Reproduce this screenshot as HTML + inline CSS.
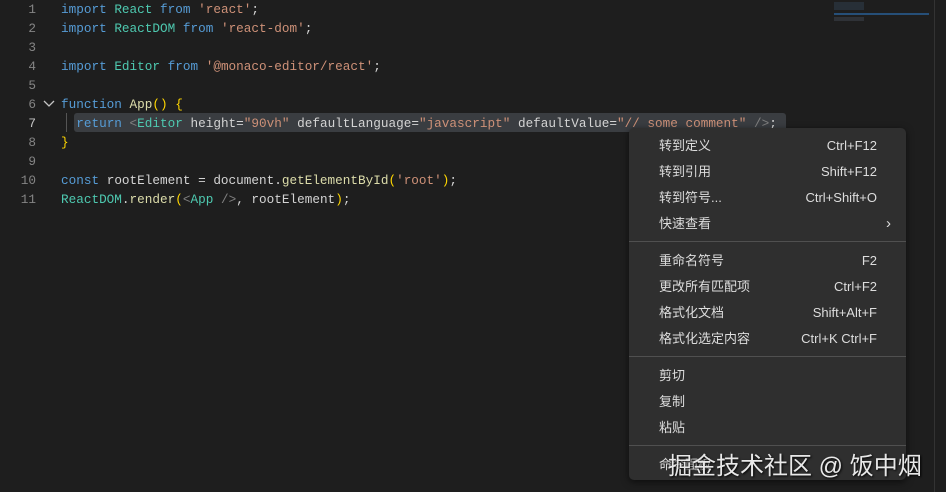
<!DOCTYPE html>
<html><head><meta charset="utf-8"><style>
body{margin:0;width:946px;height:492px;background:#1e1e1e;overflow:hidden;position:relative;font-family:"Liberation Mono",monospace}
.ln{position:absolute;left:0;width:36px;text-align:right;color:#858585;font-size:12.7px;line-height:19px}
.code{position:absolute;left:61px;font-size:12.7px;line-height:19px;color:#d4d4d4;white-space:pre}
.k{color:#569cd6}.c{color:#c586c0}.s{color:#ce9178}.t{color:#4ec9b0}.f{color:#dcdcaa}.v{color:#d4d4d4}.a{color:#d4d4d4}.y{color:#ffd700}.g{color:#808080}
.menu{position:absolute;left:629px;top:128px;width:277px;height:352px;background:#2f2f2f;border-radius:5px;box-shadow:0 2px 8px rgba(0,0,0,.6);font-family:"Liberation Sans","Noto Sans CJK SC",sans-serif;font-size:13px;color:#ddd}
.it{position:absolute;left:30px;right:29px;height:20px;line-height:20px}
.it span{float:right}
.sep{position:absolute;left:0;right:0;height:1px;background:#505050}
</style></head><body>
<div style="position:absolute;left:74px;top:113px;width:712px;height:19px;background:#3a3d41;border-radius:3px"></div>
<div style="position:absolute;left:66px;top:113px;width:1px;height:19px;background:#555"></div>
<div class="ln" style="top:0">1<br>2<br>3<br>4<br>5<br>6<br><span style="color:#c6c6c6">7</span><br>8<br>9<br>10<br>11</div>
<svg style="position:absolute;left:42px;top:98px" width="14" height="12"><path d="M2 3 L7 8 L12 3" stroke="#c5c5c5" stroke-width="1.3" fill="none"/></svg>
<div class="code" style="top:0"><span class="k">import</span> <span class="t">React</span> <span class="k">from</span> <span class="s">'react'</span>;
<span class="k">import</span> <span class="t">ReactDOM</span> <span class="k">from</span> <span class="s">'react-dom'</span>;

<span class="k">import</span> <span class="t">Editor</span> <span class="k">from</span> <span class="s">'@monaco-editor/react'</span>;

<span class="k">function</span> <span class="f">App</span><span class="y">()</span> <span class="y">{</span>
  <span class="k">return</span> <span class="g">&lt;</span><span class="t">Editor</span> <span class="a">height</span>=<span class="s">"90vh"</span> <span class="a">defaultLanguage</span>=<span class="s">"javascript"</span> <span class="a">defaultValue</span>=<span class="s">"// some comment"</span> <span class="g">/&gt;</span>;
<span class="y">}</span>

<span class="k">const</span> <span class="v">rootElement</span> = <span class="v">document</span>.<span class="f">getElementById</span><span class="y">(</span><span class="s">'root'</span><span class="y">)</span>;
<span class="t">ReactDOM</span>.<span class="f">render</span><span class="y">(</span><span class="g">&lt;</span><span class="t">App</span> <span class="g">/&gt;</span>, <span class="v">rootElement</span><span class="y">)</span>;</div>
<div style="position:absolute;left:934px;top:0;width:1px;height:492px;background:#333"></div>
<div style="position:absolute;left:834px;top:13px;width:95px;height:2px;background:#264f78"></div>
<div style="position:absolute;left:834px;top:2px;width:30px;height:8px;background:#2d3b48;opacity:.6"></div>
<div style="position:absolute;left:834px;top:17px;width:30px;height:4px;background:#3a4048;opacity:.6"></div>
<div class="menu">
<div class="it" style="top:8px">转到定义<span>Ctrl+F12</span></div>
<div class="it" style="top:34px">转到引用<span>Shift+F12</span></div>
<div class="it" style="top:60px">转到符号...<span>Ctrl+Shift+O</span></div>
<div class="it" style="top:86px">快速查看<span style="margin-right:-14px;font-size:15px">›</span></div>
<div class="sep" style="top:113px"></div>
<div class="it" style="top:123px">重命名符号<span>F2</span></div>
<div class="it" style="top:149px">更改所有匹配项<span>Ctrl+F2</span></div>
<div class="it" style="top:175px">格式化文档<span>Shift+Alt+F</span></div>
<div class="it" style="top:201px">格式化选定内容<span>Ctrl+K Ctrl+F</span></div>
<div class="sep" style="top:228px"></div>
<div class="it" style="top:238px">剪切</div>
<div class="it" style="top:264px">复制</div>
<div class="it" style="top:290px">粘贴</div>
<div class="sep" style="top:317px"></div>
<div class="it" style="top:327px">命令面板</div>
</div>
<div style="position:absolute;left:668px;top:446px;font-family:'Liberation Sans','Noto Sans CJK SC',sans-serif;font-size:24px;color:#e8e8e8;text-shadow:1px 1px 2px #000;white-space:nowrap">掘金技术社区 @ 饭中烟</div>
</body></html>
